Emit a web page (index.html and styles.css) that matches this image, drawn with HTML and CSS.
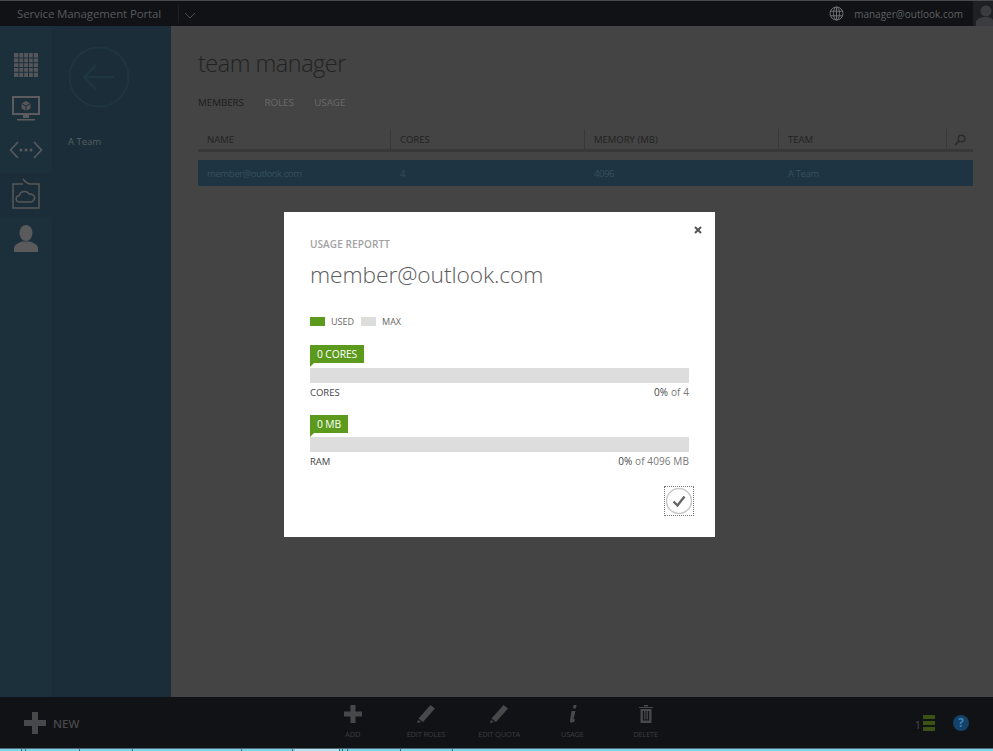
FILE: index.html
```html
<!DOCTYPE html>
<html lang="en">
<head>
<meta charset="utf-8">
<title>Service Management Portal</title>
<link rel="stylesheet" href="styles.css">
</head>
<body>
<div class="page">
  <header class="topbar">
    <span class="brand">Service Management Portal</span>
    <span class="brand-sep"></span>
    <svg class="chev" width="12" height="7" viewBox="0 0 12 7"><path d="M1 1l5 5 5-5" fill="none" stroke="#4a4d50" stroke-width="1"/></svg>
    <span class="spacer"></span>
    <svg class="globe" width="15" height="15" viewBox="0 0 15 15" fill="none" stroke="#6c6e70" stroke-width="1"><circle cx="7.5" cy="7.5" r="6.5"/><ellipse cx="7.5" cy="7.5" rx="3" ry="6.5"/><path d="M1 5.2h13M1 9.8h13M7.5 1v13"/></svg>
    <span class="user">manager@outlook.com</span>
    <span class="avatar"><svg width="20" height="26" viewBox="0 0 20 26"><circle cx="13" cy="10" r="5.5" fill="#3a3c3f"/><path d="M3 26v-5c0-3 5-5 10-5s7 2 7 4v6z" fill="#3a3c3f"/></svg></span>
  </header>
  <div class="main">
    <nav class="rail">
      <div class="rail-item first">
        <svg width="24" height="24" viewBox="0 0 24 24" fill="#55565a"><path d="M0 0h24v24H0z"/><path d="M4.4 0h1v24h-1zM9.2 0h1v24h-1zM14 0h1v24h-1zM18.800 0h1v24h-1zM0 4.400h24v1H0zM0 9.200h24v1H0zM0 14h24v1H0zM0 18.800h24v1H0z" fill="#1c303c"/></svg>
      </div>
      <div class="rail-item monitor">
        <svg width="28" height="26" viewBox="0 0 28 26" fill="none"><path d="M1 1h26v17H1z" stroke="#5c5c5e" stroke-width="2"/><path d="M14 5l4.500 2.500v5L14 15l-4.500-2.500v-5z" fill="#5a5556"/><path d="M14 10v5M9.500 7.500L14 10l4.500-2.500" stroke="#1c303c" stroke-width="1"/><path d="M11 19h6v3h-6zM5 23h18v1.500H5z" fill="#5c5c5e"/></svg>
      </div>
      <div class="rail-item lift">
        <svg width="34" height="20" viewBox="0 0 34 20" fill="none" stroke="#5a5a5c" stroke-width="1.600"><path d="M9 2L1.500 10 9 18M25 2l7.500 8L25 18"/><circle cx="12" cy="10" r="1.500" fill="#5a5a5c" stroke="none"/><circle cx="17" cy="10" r="1.500" fill="#5a5a5c" stroke="none"/><circle cx="22" cy="10" r="1.500" fill="#5a5a5c" stroke="none"/></svg>
      </div>
      <div class="rail-item active lift-more">
        <svg width="30" height="32" viewBox="0 0 30 32" fill="none" stroke="#585858" stroke-width="1.500"><path d="M12 7H2v24h26V7h-8c-2 0-5-1-8-5"/><path d="M9 25c-5 0-5-6-.5-6.500C9 14 16 13 18 17c5-.5 7 3.500 4.500 6.500-.5 1-1.500 1.500-3 1.500z"/></svg>
      </div>
      <div class="rail-item lift">
        <svg width="24" height="27" viewBox="0 0 24 27" fill="#5a5a5c"><ellipse cx="12" cy="8" rx="6.500" ry="8"/><path d="M0 27v-4c0-3 4-5 8-6.500h8c4 1.500 8 3.500 8 6.500v4z"/></svg>
      </div>
    </nav>
    <aside class="side">
      <svg class="back" width="64" height="64" viewBox="0 0 64 64" fill="none" stroke="#1f3642"><circle cx="32" cy="32" r="29.500" stroke-width="2"/><path d="M47 32H17M29 20L17 32l12 12" stroke-width="2.500"/></svg>
      <div class="side-label">A Team</div>
    </aside>
    <section class="content">
      <h1 class="title">team manager</h1>
      <div class="tabs"><span class="tab on">MEMBERS</span><span class="tab">ROLES</span><span class="tab">USAGE</span></div>
      <div class="thead">
        <div class="th">NAME</div>
        <div class="th">CORES</div>
        <div class="th">MEMORY (MB)</div>
        <div class="th">TEAM</div>
        <div class="th search"><svg width="12" height="12" viewBox="0 0 12 12" fill="none" stroke="#2b2b2b"><circle cx="7.500" cy="4.500" r="3.300" stroke-width="1.500"/><path d="M5 7L1 11" stroke-width="2"/></svg></div>
      </div>
      <div class="trow">
        <div class="td">member@outlook.com</div>
        <div class="td">4</div>
        <div class="td">4096</div>
        <div class="td">A Team</div>
      </div>
    </section>
  </div>
  <footer class="bottom">
    <div class="new">
      <svg width="22" height="22" viewBox="0 0 22 22" fill="#474849"><path d="M8 0h6v8h8v6h-8v8H8v-8H0V8h8z"/></svg>
      <span>NEW</span>
    </div>
    <div class="actions">
      <div class="action"><svg width="18" height="18" viewBox="0 0 18 18" fill="#474849"><path d="M6.500 0h5v6.500H18v5h-6.500V18h-5v-6.500H0v-5h6.500z"/></svg><span>ADD</span></div>
      <div class="action"><svg width="18" height="18" viewBox="0 0 18 18" fill="#474849"><path d="M13.500 0L18 3.500 6 17 1.500 13.500zM1 15l3 2-4 1z"/></svg><span>EDIT ROLES</span></div>
      <div class="action"><svg width="18" height="18" viewBox="0 0 18 18" fill="#474849"><path d="M13.500 0L18 3.500 6 17 1.500 13.500zM1 15l3 2-4 1z"/></svg><span>EDIT QUOTA</span></div>
      <div class="action"><svg width="18" height="18" viewBox="0 0 18 18" fill="#474849"><path d="M10.500 0h3l-.5 3.500h-3zM8.500 6h4L10.500 14.500l1.500-.5-.5 2.500c-2.500 1.500-5 1.500-4.500-1z"/></svg><span>USAGE</span></div>
      <div class="action"><svg width="14" height="18" viewBox="0 0 14 18" fill="#474849"><path d="M0 2h14v1H0zM5 0h4v1.500H5zM1.500 4h11v14h-11z"/><path d="M4.500 6v9h5V6" fill="none" stroke="#111215" stroke-width="1.200"/><path d="M7 6v9" stroke="#111215"/></svg><span>DELETE</span></div>
    </div>
    <div class="status">
      <span class="count">1</span>
      <span class="stack"><i></i><i></i><i></i></span>
      <span class="help">?</span>
    </div>
  </footer>
  <div class="strip"></div>
</div>
<div class="modal">
  <svg class="close" width="8" height="8" viewBox="0 0 8 8"><path d="M1 1l6 6M7 1L1 7" stroke="#555" stroke-width="2"/></svg>
  <div class="eyebrow">USAGE REPORTT</div>
  <h2 class="who">member@outlook.com</h2>
  <div class="legend">
    <i class="swatch used"></i><span>USED</span>
    <i class="swatch max"></i><span>MAX</span>
  </div>
  <div class="meter">
    <div class="tag">0 CORES</div>
    <div class="bar"></div>
    <div class="meter-foot"><span>CORES</span><span class="of"><b>0%</b> of 4</span></div>
  </div>
  <div class="meter second">
    <div class="tag">0 MB</div>
    <div class="bar"></div>
    <div class="meter-foot"><span>RAM</span><span class="of"><b>0%</b> of 4096 MB</span></div>
  </div>
  <div class="modal-foot">
    <span class="ok"><svg width="26" height="26" viewBox="0 0 26 26" fill="none"><circle cx="13" cy="13" r="12.500" stroke="#c9c9c9" stroke-width="1.500"/><path d="M7.500 13.500l4 4 7-9" stroke="#666" stroke-width="2.400"/></svg></span>
  </div>
</div>
</body>
</html>
```
FILE: styles.css
```css
* { box-sizing: border-box; }
html, body { margin: 0; padding: 0; }
body { width: 993px; height: 751px; overflow: hidden; position: relative; background: #444; font-family: "Open Sans", "Liberation Sans", sans-serif; }
.page { display: flex; flex-direction: column; height: 751px; }

.topbar { height: 26px; flex: none; background: #111215; border-top: 1px solid #4a4a4a; display: flex; align-items: center; color: #57595c; font-size: 11.500px; }
.brand { margin-left: 17px; letter-spacing: -0.12px; }
.brand-sep { width: 1px; height: 18px; margin-left: 17px; background: #1e2023; }
.chev { margin-left: 5px; margin-top: 3px; }
.spacer { flex: 1; }
.globe { margin-right: 10px; }
.user { font-size: 10px; color: #5e6062; margin-right: 10px; }
.avatar { width: 20px; height: 25px; background: #1e2023; overflow: hidden; display: block; }

.main { flex: 1; display: flex; min-height: 0; }
.rail { width: 52px; flex: none; background: #1c303c; display: flex; flex-direction: column; }
.rail-item { height: 44px; display: flex; align-items: center; justify-content: center; }
.rail-item.first { height: 59px; padding-top: 18px; }
.rail-item.monitor { padding-top: 4px; }
.rail-item.lift { padding-bottom: 2px; }
.rail-item.lift-more { padding-bottom: 4px; }
.rail-item.active { background: #1a2d38; }
.side { width: 119px; flex: none; background: #1a2d38; padding: 19px 0 0 16px; }
.back { display: block; margin-left: -1px; }
.side-label { margin-top: 26px; font-size: 9.500px; color: #55605f; }
.content { flex: 1; padding: 0 20px 0 27px; min-width: 0; }
.title { margin: 19px 0 0; font-size: 23.500px; line-height: 36px; font-weight: 300; color: #222; letter-spacing: -0.5px; }
.tabs { display: flex; gap: 20.500px; margin-top: 15px; font-size: 9.800px; line-height: 14px; color: #6a6a6a; letter-spacing: -0.05px; }
.tab.on { color: #1d1d1d; }
.thead { display: grid; grid-template-columns: 193px 194px 194px 168px 1fr; height: 24px; margin-top: 18px; padding-top: 1px; border-bottom: 3px solid #383838; }
.th { padding-left: 9px; font-size: 9.500px; line-height: 22px; color: #222; border-right: 1px solid #383838; height: 20px; }
.th.search { border-right: 0; padding: 5px 0 0 7px; }
.th.search svg { display: block; }
.trow { display: grid; grid-template-columns: 193px 194px 194px 168px 1fr; height: 26px; margin-top: 8px; background: #1e3442; align-items: center; }
.td { padding-left: 9px; font-size: 9.500px; color: #36505c; letter-spacing: -0.4px; }

.bottom { height: 51px; flex: none; background: #111215; display: flex; color: #47484a; position: relative; }
.new { display: flex; align-items: center; gap: 7px; padding: 0 0 0 24px; width: 316px; font-size: 11.500px; font-weight: 600; height: 50px; margin-top: 1px; }
.actions { display: flex; }
.action { width: 73.250px; display: flex; flex-direction: column; align-items: center; padding-top: 8px; font-size: 7.500px; letter-spacing: -0.2px; color: #3c3d3f; }
.action svg { display: block; height: 18px; }
.action span { margin-top: 6px; line-height: 11px; }
.status { position: absolute; right: 24px; top: 17px; display: flex; align-items: center; }
.count { font-size: 11px; color: #4a4b4c; margin-right: 2px; margin-top: 3px; }
.stack { display: flex; flex-direction: column; gap: 2px; width: 12px; margin-right: 18px; }
.stack i { height: 4px; background: #3a5214; display: block; }
.help { width: 16px; height: 16px; border-radius: 50%; background: #144268; color: #3e83b5; font-size: 12px; font-weight: 700; text-align: center; line-height: 16px; }
.strip { height: 3px; flex: none; border-top: 1px solid #4d6a72; background-color: #7fd3e6; background-image: linear-gradient(90deg, transparent 21px, #3f6a78 21px 22px, transparent 22px 25px, #3f6a78 25px 26px, transparent 26px 79px, #3f6a78 79px 80px, transparent 80px 132px, #3f6a78 132px 133px, transparent 133px 241px, #3f6a78 241px 242px, transparent 242px 292px, #3f6a78 292px 293px, transparent 293px 295px, #b8e3ee 295px 339px, #3f6a78 339px 340px, transparent 340px 342px, #3f6a78 342px 343px, transparent 343px 347px, #3f6a78 347px 348px, transparent 348px 400px, #3f6a78 400px 401px, transparent 401px 452px, #3f6a78 452px 453px, transparent 453px); }

.modal { position: absolute; left: 284px; top: 212px; width: 431px; height: 325px; background: #fff; padding: 26px 26px 0; }
.close { position: absolute; left: 410px; top: 14px; }
.eyebrow { font-size: 10px; line-height: 13px; font-weight: 600; color: #a2a2a2; letter-spacing: 0.1px; }
.who { margin: 8px 0 0; font-size: 22.800px; line-height: 32px; font-weight: 300; color: #5c5c5c; letter-spacing: -0.1px; }
.legend { display: flex; align-items: center; margin-top: 24px; font-size: 9px; line-height: 14px; color: #666; height: 14px; }
.swatch { width: 15px; height: 9px; display: block; margin-right: 6px; margin-top: -2px; }
.swatch.used { background: #5b9a1c; }
.swatch.max { background: #ddd; margin-left: 7px; }
.meter { margin-top: 16px; }
.tag { display: block; width: fit-content; height: 18px; background: #5b9a1c; color: #fff; font-size: 10.300px; font-weight: 500; line-height: 18px; padding: 0 7px; position: relative; letter-spacing: -0.1px; }
.tag::after { content: ""; position: absolute; left: 0; top: 18px; border-top: 4px solid #5b9a1c; border-right: 4px solid transparent; }
.bar { height: 15px; margin-top: 5px; background: #ddd; }
.second .bar { margin-top: 4px; }
.meter-foot { display: flex; justify-content: space-between; font-size: 9.500px; line-height: 13px; margin-top: 3px; color: #444; }
.of { color: #777; font-size: 10px; letter-spacing: 0.1px; }
.of b { font-weight: 400; color: #444; }
.modal-foot { display: flex; justify-content: flex-end; margin: 18px -5px 0 0; }
.ok { width: 30px; height: 30px; border: 1px dotted #777; display: flex; align-items: center; justify-content: center; }
```
